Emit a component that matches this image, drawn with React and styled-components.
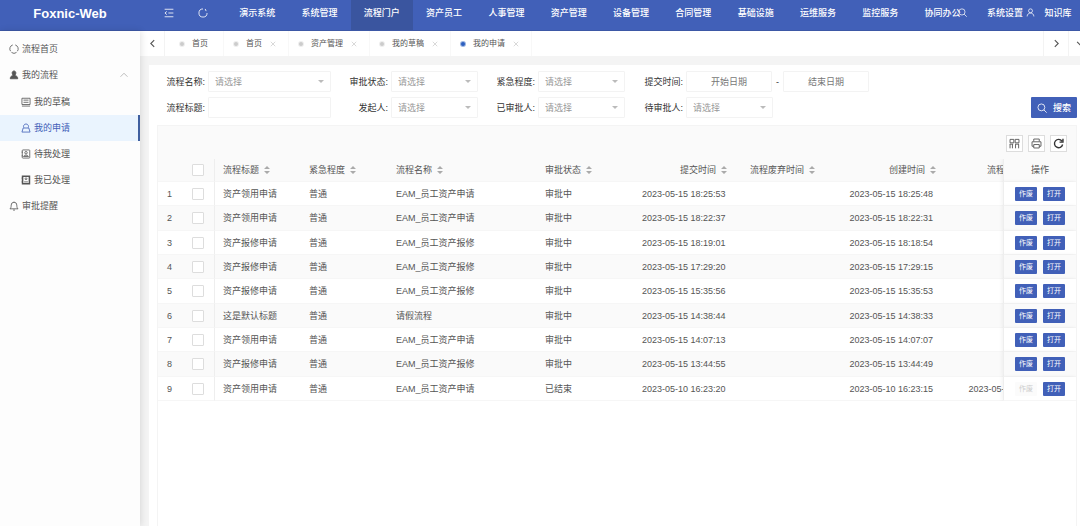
import React, { useState } from "react";
import styled, { createGlobalStyle, css } from "styled-components";

const blue = "#4160b8";

const GlobalStyle = createGlobalStyle`
  * {
    box-sizing: border-box;
  }
  body {
    margin: 0;
    color: #555;
    background: #f4f4f4;
    font: 9px/12px "Liberation Sans", "Noto Sans CJK SC", sans-serif;
  }
  button, input, select {
    font: inherit;
    color: inherit;
    margin: 0;
    padding: 0;
  }
  button {
    cursor: pointer;
  }
  a {
    color: inherit;
    text-decoration: none;
  }
  svg {
    flex-shrink: 0;
  }
`;

// Page shell
const Page = styled.div`
  display: flex;
  flex-direction: column;
  min-height: 100vh;
  overflow: hidden;
`;
const Body = styled.div`
  flex: 1;
  display: flex;
`;
const Main = styled.main`
  flex: 1;
  min-width: 0;
  display: flex;
  flex-direction: column;
`;

// Header
const Header = styled.header`
  position: relative;
  display: flex;
  height: 31px;
  color: #fff;
  background: ${blue};
  border-bottom: 1px solid #3d58a6;
`;
const Logo = styled.a`
  width: 140px;
  text-align: center;
  font-size: 13px;
  font-weight: bold;
  line-height: 28px;
`;
const HeaderTools = styled.div`
  display: flex;
  width: 86px;
  padding: 0 0 4px 17px;
`;
const IconButton = styled.button`
  display: flex;
  align-items: center;
  justify-content: center;
  width: ${(props) => props.$width || 24}px;
  border: 0;
  background: none;
`;
const HeaderNav = styled.nav`
  flex: 1;
  min-width: 0;
  display: flex;
`;
const HeaderLink = styled.a`
  flex: ${(props) => (props.$last ? "0 0 44px" : "1 0 auto")};
  text-align: center;
  font-weight: 500;
  line-height: 26px;
  white-space: nowrap;
  ${(props) => props.$active && css`
    background: #3a559f;
  `}
`;
// the search and user icons float over the menu
const HeaderFloat = styled.div`
  position: absolute;
  top: 8px;
  right: 45px;
  display: flex;
  gap: 59px;
`;

// Sidebar
const Sidebar = styled.aside`
  width: 140px;
  padding-top: 5px;
  background: #fdfdfd;
  box-shadow: 1px 0 7px rgba(0, 0, 0, 0.12);
  z-index: 1;
`;
const SubMenu = styled.div`
  padding-top: 1px;
`;
const MenuLink = styled.a`
  display: flex;
  align-items: center;
  gap: 3px;
  height: 26px;
  padding: 0 10px 0 ${(props) => (props.$sub ? 21 : 9)}px;
  border-right: 2px solid transparent;
  ${(props) => props.$active && css`
    color: ${blue};
    background: #eaf4fe;
    border-color: #3f5f9f;
  `}
`;
const MenuText = styled.span`
  flex: 1;
`;

// Page tabs
const TabBar = styled.div`
  display: flex;
  height: 25px;
  font-size: 8px;
  background: #fff;
`;
const TabArrow = styled(IconButton)`
  width: 25px;
  border: solid #f3f3f3;
  border-width: ${(props) => (props.$right ? "0 0 0 1px" : "0 1px 0 0")};
`;
const TabMore = styled(TabArrow)`
  width: 12px;
  padding-left: 7px;
  justify-content: flex-start;
  overflow: hidden;
`;
const TabList = styled.div`
  flex: 1;
  display: flex;
`;
const Tab = styled.div`
  display: flex;
  align-items: center;
  gap: 8px;
  padding: ${(props) => (props.$home ? "0 15px" : "0 12px 0 10px")};
  border-right: 1px solid #f8f8f8;
`;
const TabLink = styled.a`
  display: flex;
  align-items: center;
  gap: 8px;
  &::before {
    content: "";
    width: 4px;
    height: 4px;
    border-radius: 50%;
    background: ${(props) => (props.$active ? "#2c5fc0" : "#ccc")};
    box-shadow: 0 0 0 1px ${(props) => (props.$active ? "#9db5e0" : "#eee")};
  }
`;

// Content card and search form
const Card = styled.section`
  flex: 1;
  display: flex;
  flex-direction: column;
  margin: 9px 0 0 9px;
  padding: 6px 3px 0 8px;
  background: #fff;
`;
const SearchForm = styled.form`
  display: flex;
  align-items: flex-end;
  padding-left: 9px;
`;
const Fields = styled.div`
  flex: 1;
  display: grid;
  grid-template-columns: 165px 147px 148px 1fr;
  gap: 5px 0;
`;
const Field = styled.div`
  display: flex;
  align-items: center;
  color: #333;
`;
const Label = styled.label`
  flex: 0 0 ${(props) => (props.$first ? 42 : 60)}px;
  padding-right: 3px;
  text-align: right;
`;
const controlBox = css`
  height: 21px;
  border: 1px solid #f3f3f3;
  border-radius: 1px;
  background: #fff;
  &::placeholder {
    color: #777;
  }
`;
const TextInput = styled.input`
  ${controlBox}
  flex: 1;
  min-width: 0;
  padding: 0 6px;
`;
const DateInput = styled.input`
  ${controlBox}
  width: 86px;
  text-align: center;
`;
const DateDash = styled.span`
  width: 11px;
  text-align: center;
`;
const SelectWrap = styled.span`
  position: relative;
  flex: ${(props) => (props.$wide ? "1" : "0 0 87px")};
  &::after {
    content: "";
    position: absolute;
    right: 7px;
    top: 9px;
    border: 3px solid transparent;
    border-top-color: #bbb;
    border-bottom: 0;
    pointer-events: none;
  }
`;
const Select = styled.select`
  ${controlBox}
  display: block;
  width: 100%;
  padding: 0 6px;
  color: #999;
  appearance: none;
`;
const SearchButton = styled.button`
  display: flex;
  align-items: center;
  justify-content: center;
  gap: 6px;
  width: 46px;
  height: 21px;
  border: 0;
  border-radius: 1px;
  color: #fff;
  background: ${blue};
  font-weight: 500;
`;

// Table
const TableBox = styled.div`
  flex: 1;
  margin-top: 7px;
  border: 1px solid #f4f4f4;
  border-bottom: 0;
`;
const TableTools = styled.div`
  display: flex;
  justify-content: flex-end;
  gap: 5px;
  padding: 9px 9px 7px;
  background: #fafafa;
`;
const ToolButton = styled.button`
  display: flex;
  align-items: center;
  justify-content: center;
  width: 17px;
  height: 17px;
  border: 1px solid #ddd;
  background: #fff;
`;
const TableScroll = styled.div`
  overflow: auto hidden;
`;
const Table = styled.table`
  width: 100%;
  min-width: 900px;
  table-layout: fixed;
  border-collapse: separate;
  border-spacing: 0;
  white-space: nowrap;
`;
const Cell = styled.td`
  height: 24px;
  padding: 0 8px;
  text-align: ${(props) => props.$align || "left"};
  background: #fff;
  border-bottom: 1px solid #f6f6f6;
  tr:nth-child(3n + 2) > & {
    height: 25px;
  }
  tr:nth-child(even) > & {
    background: #fafafa;
  }
  ${(props) => props.$index && css`
    padding: 0 0 0 9px;
  `}
  ${(props) => props.$edge && css`
    padding: 0 0 0 10px;
    border-right: 1px solid #eee;
  `}
  ${(props) => props.$clip && css`
    overflow: hidden;
  `}
  ${(props) => props.$fixed && css`
    position: sticky;
    right: 0;
    padding: 0 11px;
    border-left: 1px solid #eee;
    box-shadow: -1px 0 4px rgba(0, 0, 0, 0.06);
  `}
`;
const HeadCell = styled(Cell)`
  font-weight: normal;
  ${(props) => props.$align === "right" && css`
    padding-right: 5px;
  `}
  thead tr > & {
    height: 23px;
    background: #fafafa;
  }
`;
const ClipText = styled.div`
  width: 103px;
  text-align: right;
`;
const HeadSort = styled.button`
  display: inline-flex;
  align-items: center;
  gap: 5px;
  border: 0;
  background: none;
`;
const Checkbox = styled.input`
  display: block;
  appearance: none;
  width: 12px;
  height: 12px;
  border: 1px solid #ddd;
  border-radius: 1px;
  background: #fff;
  &:checked {
    background: ${blue};
  }
`;
const Actions = styled.div`
  display: flex;
  gap: 6px;
`;
const RowButton = styled.button`
  width: 22px;
  height: 14px;
  border: 0;
  border-radius: 1px;
  color: #fff;
  background: ${blue};
  font-size: 7px;
  line-height: 14px;
  &:disabled {
    color: #ccc;
    background: #fbfbfb;
    cursor: default;
  }
`;

// Line icons, all on a 16 x 16 box
const icons = {
  collapse: <path d="M1 2h14M7 8h8M1 14h14M4.500 5.500L1.500 8l3 2.500" />,
  refresh: <path d="M8 1.500a6.500 6.500 0 1 0 6.500 6.500M11.500 1.500l1.500 3.500" />,
  search: <><circle cx="7" cy="7" r="5.500" /><path d="M11 11l4.500 4.500" /></>,
  user: <><circle cx="8" cy="5" r="3.500" /><path d="M2 15c0-4 3-6 6-6s6 2 6 6" /></>,
  ring: <path d="M6 1.500a6.500 6.500 0 0 0-3.500 10M10 1.500a6.500 6.500 0 0 1 3.500 10M4 13.500a6.500 6.500 0 0 0 8 0" />,
  person: <path fill="currentColor" d="M8 1.500c2 0 3 1.500 3 3.500S9.500 8 9.500 9c2.500 0 4.500 1.500 4.500 5H2c0-3.500 2-5 4.500-5C6.500 8 5 7 5 5s1-3.500 3-3.500z" />,
  draft: <path d="M1.500 2h13v10h-13zM4 5h8M4 8.500h8M1.500 14.500h13" />,
  apply: <><path d="M4.500 7.500a4 4 0 1 1 7 0" /><path d="M3.500 8h9l2 6.500h-13z" /></>,
  todo: <><rect x="2" y="1.500" width="12" height="13" rx="1" /><circle cx="8" cy="6" r="2" /><path d="M4 12c1-3 7-3 8 0zM1 5h2M1 11h2" /></>,
  done: <><path strokeWidth="2.500" d="M2.500 2h11v12h-11z" /><circle cx="8" cy="6" r="1.500" /><path d="M5 11h6M1 5h2M1 11h2" /></>,
  bell: <path d="M1.500 12.500h13c-1.500-1-2-3-2-6a4.500 4.500 0 0 0-9 0c0 3-.5 5-2 6zM6.500 14.500h3M8 1v1" />,
  up: <path d="M1 11.500l7-7 7 7" />,
  left: <path d="M11 2L5 8l6 6" />,
  right: <path d="M5 2l6 6-6 6" />,
  down: <path d="M2 5l6 6 6-6" />,
  close: <path d="M2 2l12 12M14 2L2 14" />,
  columns: <path d="M1.500 2h5.500v5h-5.500zM9 2h5.500v5h-5.500zM1.500 9v6M5 9v6M9.500 9v6M14 9v6M1 9h5M9 9h5.500" />,
  print: <><path d="M4 5V1.500h8V5M4 12H1.500V5.500h13V12H12" /><path d="M4 9.500h8v5H4z" /></>,
  reload: <path d="M13 4.500a6 6 0 1 0 1 5M14.500 1v5h-5" />,
};

function Icon({ name, size = 9, color = "currentColor", weight = 1.3 }) {
  return (
    <svg width={size} height={size} viewBox="0 0 16 16" fill="none" stroke={color} strokeWidth={weight} aria-hidden="true">
      {icons[name]}
    </svg>
  );
}

function SortIcon() {
  return (
    <svg width="6" height="8" viewBox="0 0 6 8" fill="#aaa" aria-hidden="true">
      <path d="M3 0l3 3H0zM3 8l3-3H0z" />
    </svg>
  );
}

const systems = [
  "演示系统", "系统管理", "流程门户", "资产员工", "人事管理", "资产管理", "设备管理",
  "合同管理", "基础设施", "运维服务", "监控服务", "协同办公", "系统设置", "知识库",
];

const menu = [
  { text: "流程首页", icon: "ring" },
  {
    text: "我的流程",
    icon: "person",
    children: [
      { text: "我的草稿", icon: "draft" },
      { text: "我的申请", icon: "apply", active: true },
      { text: "待我处理", icon: "todo" },
      { text: "我已处理", icon: "done" },
    ],
  },
  { text: "审批提醒", icon: "bell" },
];

const tabs = ["首页", "首页", "资产管理", "我的草稿", "我的申请"];

// the last column takes what is left and is cut off at its edge
const columns = [
  { text: "流程标题", width: 86 },
  { text: "紧急程度", width: 87 },
  { text: "流程名称", width: 149 },
  { text: "审批状态", width: 97 },
  { text: "提交时间", width: 98, align: "right" },
  { text: "流程废弃时间", width: 88, align: "right" },
  { text: "创建时间", width: 121, align: "right" },
  { text: "流程完成时间", clip: true },
];

const rows = [
  ["资产领用申请", "普通", "EAM_员工资产申请", "审批中", "2023-05-15 18:25:53", "", "2023-05-15 18:25:48", ""],
  ["资产领用申请", "普通", "EAM_员工资产申请", "审批中", "2023-05-15 18:22:37", "", "2023-05-15 18:22:31", ""],
  ["资产报修申请", "普通", "EAM_员工资产报修", "审批中", "2023-05-15 18:19:01", "", "2023-05-15 18:18:54", ""],
  ["资产报修申请", "普通", "EAM_员工资产报修", "审批中", "2023-05-15 17:29:20", "", "2023-05-15 17:29:15", ""],
  ["资产报修申请", "普通", "EAM_员工资产报修", "审批中", "2023-05-15 15:35:56", "", "2023-05-15 15:35:53", ""],
  ["这是默认标题", "普通", "请假流程", "审批中", "2023-05-15 14:38:44", "", "2023-05-15 14:38:33", ""],
  ["资产领用申请", "普通", "EAM_员工资产申请", "审批中", "2023-05-15 14:07:13", "", "2023-05-15 14:07:07", ""],
  ["资产报修申请", "普通", "EAM_员工资产报修", "审批中", "2023-05-15 13:44:55", "", "2023-05-15 13:44:49", ""],
  ["资产领用申请", "普通", "EAM_员工资产申请", "已结束", "2023-05-10 16:23:20", "", "2023-05-10 16:23:15", "2023-05-10 16:25:08"],
];

function MenuItem({ item, sub }) {
  return (
    <>
      <MenuLink href="#" $sub={sub} $active={item.active}>
        <Icon name={item.icon} size={10} />
        <MenuText>{item.text}</MenuText>
        {item.children && <Icon name="up" size={8} color="#999" />}
      </MenuLink>
      {item.children && (
        <SubMenu>
          {item.children.map((child) => <MenuItem key={child.text} item={child} sub />)}
        </SubMenu>
      )}
    </>
  );
}

function SelectField({ id, label, first }) {
  return (
    <Field>
      <Label htmlFor={id} $first={first}>{label}:</Label>
      <SelectWrap $wide={first}>
        <Select id={id}>
          <option>请选择</option>
        </Select>
      </SelectWrap>
    </Field>
  );
}

function Search() {
  return (
    <SearchForm onSubmit={(e) => e.preventDefault()}>
      <Fields>
        <SelectField id="name" label="流程名称" first />
        <SelectField id="status" label="审批状态" />
        <SelectField id="priority" label="紧急程度" />
        <Field>
          <Label htmlFor="from">提交时间:</Label>
          <DateInput id="from" placeholder="开始日期" />
          <DateDash>-</DateDash>
          <DateInput aria-label="结束日期" placeholder="结束日期" />
        </Field>
        <Field>
          <Label htmlFor="title" $first>流程标题:</Label>
          <TextInput id="title" />
        </Field>
        <SelectField id="starter" label="发起人" />
        <SelectField id="approved" label="已审批人" />
        <SelectField id="pending" label="待审批人" />
      </Fields>
      <SearchButton type="submit">
        <Icon name="search" size={10} />
        搜索
      </SearchButton>
    </SearchForm>
  );
}

function ProcessTable() {
  const [checked, setChecked] = useState([]);
  const toggle = (i) =>
    setChecked(checked.includes(i) ? checked.filter((c) => c !== i) : [...checked, i]);
  const toggleAll = () =>
    setChecked(checked.length === rows.length ? [] : rows.map((row, i) => i));

  return (
    <TableScroll>
      <Table>
        <colgroup>
          <col width="24" />
          <col width="33" />
          {columns.map((col) => <col key={col.text} width={col.width} />)}
          <col width="73" />
        </colgroup>
        <thead>
          <tr>
            <HeadCell as="th" />
            <HeadCell as="th" $edge>
              <Checkbox type="checkbox" aria-label="全选" checked={checked.length === rows.length} onChange={toggleAll} />
            </HeadCell>
            {columns.map((col) => {
              const sort = <HeadSort>{col.text}<SortIcon /></HeadSort>;
              return (
                <HeadCell as="th" key={col.text} $align={col.align} $clip={col.clip}>
                  {col.clip ? <ClipText>{sort}</ClipText> : sort}
                </HeadCell>
              );
            })}
            <HeadCell as="th" $fixed $align="center">操作</HeadCell>
          </tr>
        </thead>
        <tbody>
          {rows.map((row, i) => (
            <tr key={i}>
              <Cell $index>{i + 1}</Cell>
              <Cell $edge>
                <Checkbox type="checkbox" aria-label={`选择 ${i + 1}`} checked={checked.includes(i)} onChange={() => toggle(i)} />
              </Cell>
              {row.map((text, c) => (
                <Cell key={c} $align={columns[c].align} $clip={columns[c].clip}>
                  {columns[c].clip ? <ClipText>{text}</ClipText> : text}
                </Cell>
              ))}
              <Cell $fixed>
                <Actions>
                  <RowButton disabled={row[3] === "已结束"}>作废</RowButton>
                  <RowButton>打开</RowButton>
                </Actions>
              </Cell>
            </tr>
          ))}
        </tbody>
      </Table>
    </TableScroll>
  );
}

function App() {
  return (
    <Page>
      <GlobalStyle />
      <Header>
        <Logo href="#">Foxnic-Web</Logo>
        <HeaderTools>
          <IconButton aria-label="收起菜单"><Icon name="collapse" size={10} /></IconButton>
          <IconButton aria-label="刷新" $width={44}><Icon name="refresh" size={10} /></IconButton>
        </HeaderTools>
        <HeaderNav>
          {systems.map((name, i) => (
            <HeaderLink href="#" key={name} $active={name === "流程门户"} $last={i === systems.length - 1}>
              {name}
            </HeaderLink>
          ))}
        </HeaderNav>
        <HeaderFloat>
          <Icon name="search" />
          <Icon name="user" />
        </HeaderFloat>
      </Header>
      <Body>
        {/* side menu */}
        <Sidebar>
          {menu.map((item) => <MenuItem key={item.text} item={item} />)}
        </Sidebar>
        <Main>
          {/* open pages */}
          <TabBar>
            <TabArrow aria-label="向左"><Icon name="left" weight={2} /></TabArrow>
            <TabList>
              {tabs.map((tab, i) => (
                <Tab key={i} $home={i === 0}>
                  <TabLink href="#" $active={i === tabs.length - 1}>{tab}</TabLink>
                  {i > 0 && (
                    <IconButton aria-label="关闭" $width={6}><Icon name="close" size={6} color="#ccc" weight={2} /></IconButton>
                  )}
                </Tab>
              ))}
            </TabList>
            <TabArrow aria-label="向右" $right><Icon name="right" weight={2} /></TabArrow>
            <TabMore aria-label="更多" $right><Icon name="down" weight={2} /></TabMore>
          </TabBar>
          <Card>
            <Search />
            <TableBox>
              <TableTools>
                <ToolButton aria-label="筛选列"><Icon name="columns" size={11} /></ToolButton>
                <ToolButton aria-label="打印"><Icon name="print" size={11} /></ToolButton>
                <ToolButton aria-label="重新加载"><Icon name="reload" size={11} weight={2} color="#333" /></ToolButton>
              </TableTools>
              <ProcessTable />
            </TableBox>
          </Card>
        </Main>
      </Body>
    </Page>
  );
}

export default App;
